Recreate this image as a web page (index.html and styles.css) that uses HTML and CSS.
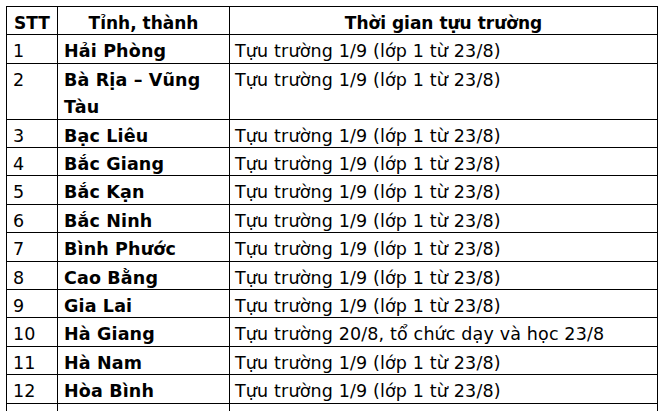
FILE: index.html
```html
<!DOCTYPE html>
<html lang="vi">
<head>
<meta charset="utf-8">
<title>Thời gian tựu trường</title>
<link rel="stylesheet" href="styles.css">
</head>
<body>
<div class="sheet">
<table class="schedule">
  <colgroup>
    <col class="c-stt">
    <col class="c-prov">
    <col class="c-time">
  </colgroup>
  <thead>
    <tr><th><span class="t">STT</span></th><th><span class="t">Tỉnh, thành</span></th><th><span class="t">Thời gian tựu trường</span></th></tr>
  </thead>
  <tbody>
    <tr><td><span class="t">1</span></td><td class="name"><span class="t">Hải Phòng</span></td><td class="time"><span class="t">Tựu trường 1/9 (lớp 1 từ 23/8)</span></td></tr>
    <tr><td><span class="t">2</span></td><td class="name"><span class="t">Bà Rịa – Vũng Tàu</span></td><td class="time"><span class="t">Tựu trường 1/9 (lớp 1 từ 23/8)</span></td></tr>
    <tr><td><span class="t">3</span></td><td class="name"><span class="t">Bạc Liêu</span></td><td class="time"><span class="t">Tựu trường 1/9 (lớp 1 từ 23/8)</span></td></tr>
    <tr><td><span class="t">4</span></td><td class="name"><span class="t">Bắc Giang</span></td><td class="time"><span class="t">Tựu trường 1/9 (lớp 1 từ 23/8)</span></td></tr>
    <tr><td><span class="t">5</span></td><td class="name"><span class="t">Bắc Kạn</span></td><td class="time"><span class="t">Tựu trường 1/9 (lớp 1 từ 23/8)</span></td></tr>
    <tr><td><span class="t">6</span></td><td class="name"><span class="t">Bắc Ninh</span></td><td class="time"><span class="t">Tựu trường 1/9 (lớp 1 từ 23/8)</span></td></tr>
    <tr><td><span class="t">7</span></td><td class="name"><span class="t">Bình Phước</span></td><td class="time"><span class="t">Tựu trường 1/9 (lớp 1 từ 23/8)</span></td></tr>
    <tr><td><span class="t">8</span></td><td class="name"><span class="t">Cao Bằng</span></td><td class="time"><span class="t">Tựu trường 1/9 (lớp 1 từ 23/8)</span></td></tr>
    <tr><td><span class="t">9</span></td><td class="name"><span class="t">Gia Lai</span></td><td class="time"><span class="t">Tựu trường 1/9 (lớp 1 từ 23/8)</span></td></tr>
    <tr><td><span class="t">10</span></td><td class="name"><span class="t">Hà Giang</span></td><td class="time"><span class="t">Tựu trường 20/8, tổ chức dạy và học 23/8</span></td></tr>
    <tr><td><span class="t">11</span></td><td class="name"><span class="t">Hà Nam</span></td><td class="time"><span class="t">Tựu trường 1/9 (lớp 1 từ 23/8)</span></td></tr>
    <tr><td><span class="t">12</span></td><td class="name"><span class="t">Hòa Bình</span></td><td class="time"><span class="t">Tựu trường 1/9 (lớp 1 từ 23/8)</span></td></tr>
    <tr><td>&nbsp;</td><td>&nbsp;</td><td>&nbsp;</td></tr>
  </tbody>
</table>
</div>
</body>
</html>
```

FILE: styles.css
```css
html, body {
  margin: 0;
  padding: 0;
  background: #ffffff;
}

.sheet {
  padding: 6px 0 0 6px;
}

.schedule {
  border-collapse: collapse;
  table-layout: fixed;
  width: 651px;
  font-family: "DejaVu Sans", "Noto Sans", sans-serif;
  font-size: 17.5px;
  letter-spacing: 0.15px;
  color: #000000;
}

.c-stt { width: 51px; }
.c-prov { width: 172px; }
.c-time { width: 428px; }

.schedule th,
.schedule td {
  border: 1px solid #000000;
  padding: 0 6px;
  line-height: 27.4px;
  vertical-align: top;
  text-align: left;
  font-weight: normal;
}

.schedule td.time {
  padding-left: 5px;
}

.schedule th {
  text-align: center;
  font-weight: bold;
  font-size: 17px;
  letter-spacing: 0;
}

.schedule .name {
  font-weight: bold;
}

.schedule .t {
  line-height: 20px;
  vertical-align: -3px;
}
```
